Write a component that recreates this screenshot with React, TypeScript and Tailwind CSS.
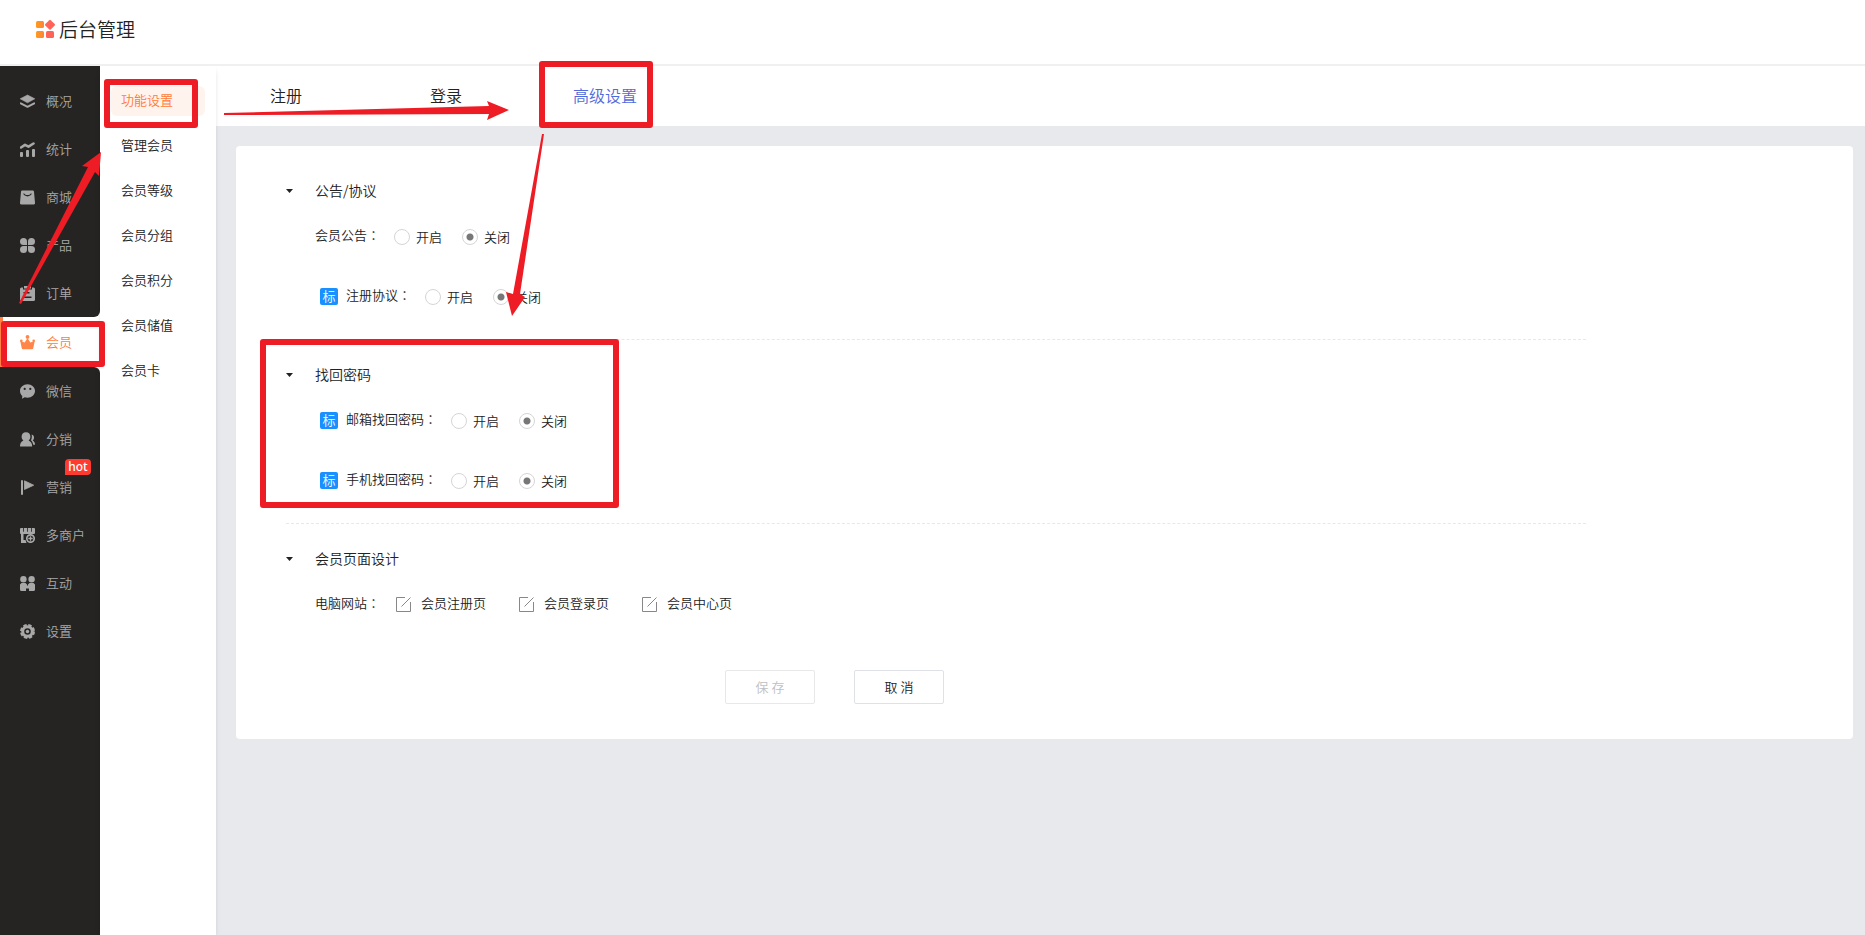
import React from "react";

type MenuItem = {
  label: string;
  icon: React.ReactNode;
  hot?: boolean;
};

const menuTop: MenuItem[] = [
  {
    label: "概况",
    icon: (
      <>
        <path d="M7.5 1 14.8 4.8 7.5 8.8 .2 4.8Z" stroke="currentColor" strokeLinejoin="round" strokeWidth=".6" />
        <path d="M.8 9.4 7.5 12.8 14.2 9.4" fill="none" stroke="currentColor" strokeWidth="2" strokeLinecap="round" strokeLinejoin="round" />
      </>
    ),
  },
  {
    label: "统计",
    icon: (
      <>
        <path d="M1 5.5 5 2.8 8.5 4.6 13.5 1.5" fill="none" stroke="currentColor" strokeWidth="2.6" strokeLinecap="round" strokeLinejoin="round" />
        <rect x="0" y="10" width="3" height="5" rx="1" />
        <rect x="6" y="8" width="3" height="7" rx="1" />
        <rect x="12" y="7" width="3" height="8" rx="1" />
      </>
    ),
  },
  {
    label: "商城",
    icon: (
      <path
        fillRule="evenodd"
        d="M2.3.5h10.4a1.3 1.3 0 0 1 1.3 1.2l1 11a1.6 1.6 0 0 1-1.6 1.8H1.6A1.6 1.6 0 0 1 0 12.7l1-11A1.3 1.3 0 0 1 2.3.5ZM3.2 3.6C4.2 7.3 10.8 7.3 11.8 3.6L10.8 3.6C9.5 5.6 5.5 5.6 4.2 3.6Z"
      />
    ),
  },
  {
    label: "产品",
    icon: (
      <>
        <path d="M3.5 0A3.5 3.5 0 0 1 7 3.5V7H3.5A3.5 3.5 0 0 1 3.5 0Z" />
        <path d="M11.5 0A3.5 3.5 0 0 1 11.5 7H8V3.5A3.5 3.5 0 0 1 11.5 0Z" />
        <path d="M3.5 8H7V11.5A3.5 3.5 0 1 1 3.5 8Z" />
        <path d="M8 8H11.5A3.5 3.5 0 1 1 8 11.5Z" />
      </>
    ),
  },
  {
    label: "订单",
    icon: (
      <path
        fillRule="evenodd"
        d="M1.5 1.5H3V3.5H12V1.5H13.5A1.5 1.5 0 0 1 15 3V13.5A1.5 1.5 0 0 1 13.5 15H1.5A1.5 1.5 0 0 1 0 13.5V3A1.5 1.5 0 0 1 1.5 1.5ZM4 0H11V2.500H4ZM3.5 6V7.5H9.5V6ZM3.5 10.5V12H11.5V10.5Z"
      />
    ),
  },
];

const menuBottom: MenuItem[] = [
  {
    label: "微信",
    icon: (
      <path
        fillRule="evenodd"
        d="M7.5.3C11.7.3 15 3.3 15 7S11.7 13.7 7.5 13.7C6.5 13.7 5.6 13.5 4.7 13.2L2 14.7 2.3 12C.9 10.8 0 9 0 7 0 3.3 3.3.3 7.5.3ZM4.7 3.8A1.1 1.1 0 1 0 4.7 6A1.1 1.1 0 1 0 4.7 3.8ZM10.3 3.8A1.1 1.1 0 1 0 10.3 6A1.1 1.1 0 1 0 10.3 3.8Z"
      />
    ),
  },
  {
    label: "分销",
    icon: (
      <>
        <path d="M6 .2C8.9.2 10.4 2.2 10.4 4.7 10.4 6.4 9.6 7.7 8.6 8.5 11 9.5 12.2 11.5 12.2 14.5H0C0 11.5 1 9.500 3.4 8.5 2.4 7.700 1.600 6.400 1.600 4.700 1.600 2.200 3.100.2 6 .2Z" />
        <path d="M11.600 2.500C13.400 2.800 14.200 4.200 14 6 13.900 7.200 13.300 8 12.700 8.600 14.200 9.500 15 11 15 12.700H13.200C12.800 10.800 12 9.300 10.900 8.300 11.900 6.500 12.100 4.500 11.600 2.500Z" />
      </>
    ),
  },
  {
    label: "营销",
    hot: true,
    icon: (
      <>
        <rect x="1" y="0" width="2" height="15" rx="1" />
        <path d="M4.500.8 13.700 5.200 4.500 9.500Z" stroke="currentColor" strokeWidth=".8" strokeLinejoin="round" />
      </>
    ),
  },
  {
    label: "多商户",
    icon: (
      <>
        <path d="M.5 0H3.200V4.500H0V1ZM4 0H7.200V4.500H4ZM8 0H11.200V4.500H8ZM12 0H14.500L15 1V4.500H12Z" />
        <path d="M0 3.800H15V5A1 1 0 0 1 14 6H1A1 1 0 0 1 0 5ZM1 5.500H3.500V12H5.500L6.500 15H1Z" />
        <circle cx="10.500" cy="10.500" r="3.700" fill="none" stroke="currentColor" strokeWidth="1.700" />
        <path d="M10.500 8.300V12.700M8.300 10.500H12.700" stroke="currentColor" strokeWidth="1.300" />
      </>
    ),
  },
  {
    label: "互动",
    icon: (
      <>
        <circle cx="3.400" cy="3.200" r="3.200" />
        <circle cx="11.600" cy="3.200" r="3.200" />
        <path d="M1.500 7H5.500L7 8.500V9.500H8V8.500L9.500 7H13.500L15 8.500V13.500A1.500 1.500 0 0 1 13.500 15H9V12.500H6V15H1.500A1.500 1.500 0 0 1 0 13.500V8.500Z" />
      </>
    ),
  },
  {
    label: "设置",
    icon: (
      <>
        <circle cx="7.500" cy="7.500" r="4.800" fill="none" stroke="currentColor" strokeWidth="3" />
        <circle cx="7.500" cy="7.500" r="6.400" fill="none" stroke="currentColor" strokeWidth="2.200" strokeDasharray="3.400 1.626" />
        <circle cx="7.500" cy="7.500" r="1.700" />
      </>
    ),
  },
];

const subMenu = ["功能设置", "管理会员", "会员等级", "会员分组", "会员积分", "会员储值", "会员卡"];

const tabs = ["注册", "登录", "高级设置"];

const pages = ["会员注册页", "会员登录页", "会员中心页"];

const Logo = () => (
  <svg viewBox="0 0 19 19" className="h-[19px] w-[19px] overflow-visible">
    <defs>
      <linearGradient id="logo" x1="0" x2="1">
        <stop offset="0" stopColor="#ff9a1f" />
        <stop offset="1" stopColor="#ff8336" />
      </linearGradient>
    </defs>
    <rect x="0" y="1" width="8" height="7" rx="1.500" fill="url(#logo)" />
    <rect x="0" y="11" width="8" height="7" rx="1.500" fill="url(#logo)" />
    <rect x="10" y="11" width="8" height="7" rx="1.500" fill="#ff6257" />
    <rect x="10.200" y="1" width="7.600" height="7.600" rx="1" fill="#ff6257" transform="rotate(45 14 4.800)" />
  </svg>
);

const MenuLink = ({ item }: { item: MenuItem }) => (
  <a href="#" className="relative flex h-12 items-center pl-5">
    <svg viewBox="0 0 15 15" className="mr-[11px] h-[15px] w-[15px]" fill="currentColor">
      {item.icon}
    </svg>
    {item.label}
    {item.hot && (
      <span className="absolute -top-1 left-[65px] flex h-4 w-[26px] items-center justify-center rounded-t-sm rounded-br-sm bg-[#ff3b30] font-['Noto_Sans',sans-serif] text-xs font-medium text-white">
        hot
      </span>
    )}
  </a>
);

const Section = ({ title, children }: { title: string; children: React.ReactNode }) => (
  <section>
    <h2 className="flex h-[30px] items-center text-sm">
      <svg viewBox="0 0 7 4" className="mr-[22px] h-1 w-[7px]">
        <path d="M0 0H7L3.500 4Z" fill="#222" />
      </svg>
      <span className="pb-0.5">{title}</span>
    </h2>
    <div className="pl-[29px]">{children}</div>
  </section>
);

const Divider = () => <hr className="mt-[13px] mb-5 max-w-[1300px] border-dashed border-[#e8e8e8]" />;

const FieldName = ({ children }: { children: string }) => (
  <span className="mr-[14px] pb-0.5">
    {children}
    <span className="font-['Noto_Sans_CJK_TC',sans-serif]" lang="zh-TW">
      ：
    </span>
  </span>
);

const RadioRow = ({ name, label, badge }: { name: string; label: string; badge?: boolean }) => (
  <fieldset className="flex h-[60px] items-center">
    {badge && (
      <span className="mr-2 ml-[5px] flex h-[17px] w-[18px] items-center justify-center rounded-xs bg-[#1890ff] pb-px text-[13px] text-white">
        标
      </span>
    )}
    <FieldName>{label}</FieldName>
    {["开启", "关闭"].map((option) => (
      <label key={option} className="mr-5 flex items-center gap-1.5 pt-0.5">
        <input
          type="radio"
          name={name}
          defaultChecked={option === "关闭"}
          className="h-4 w-4 appearance-none rounded-full border border-[#d5d5d5] bg-white checked:bg-[radial-gradient(circle,#777_3px,transparent_4px)]"
        />
        {option}
      </label>
    ))}
  </fieldset>
);

// Red pen marks laid over the page
const Marks = () => (
  <svg className="pointer-events-none absolute top-0 left-0 z-20 h-[520px] w-[700px]" viewBox="0 0 700 520">
    <g fill="none" stroke="#ee1c24" strokeWidth="6" strokeLinejoin="round">
      <rect x="107" y="82" width="88" height="43" />
      <rect x="4" y="324" width="98" height="40" />
      <rect x="542" y="64" width="108" height="61" />
      <rect x="263" y="342" width="353" height="163" />
    </g>
    <g fill="#ee1c24">
      <path d="M19 303 88 167 82 166 101 152 99 176 95 172 21 304Z" />
      <path d="M224 113 489 106 487 101 509 110 487 120 489 114 224 115Z" />
      <path d="M542 134 513 294 506 292 512 316 525 297 520 294 544 134Z" />
    </g>
  </svg>
);

export default function App() {
  return (
    <div className="relative flex min-h-screen flex-col bg-[#e8e9ed] font-['Noto_Sans_CJK_SC',sans-serif] text-[13px] font-[350] text-[#222]">
      <header className="flex h-[66px] items-center border-b-2 border-[#f0f0f0] bg-white pr-9 pb-1.5 pl-9">
        <Logo />
        <h1 className="ml-1 text-[19px]">后台管理</h1>
      </header>

      <div className="flex flex-1">
        <nav className="flex w-[100px] shrink-0 flex-col bg-white text-[#a8a8a8]">
          <div className="rounded-br-md bg-[#262422] pt-[11px]">
            {menuTop.map((item) => (
              <MenuLink key={item.label} item={item} />
            ))}
          </div>
          <a href="#" className="flex h-[50px] items-center border-l-[3px] border-[#ff7f47] pl-[17px] text-[#ff7a38]">
            <svg viewBox="0 0 15 15" className="mr-[11px] h-[15px] w-[15px]" fill="#ff8648">
              <circle cx="7.500" cy="1.900" r="1.900" />
              <circle cx="1.300" cy="5.700" r="1.300" />
              <circle cx="13.700" cy="5.700" r="1.300" />
              <path d="M.3 6 4.600 7.500 7.500 3.200 10.400 7.500 14.700 6 13.300 13A1.500 1.500 0 0 1 11.800 14.300H3.200A1.500 1.500 0 0 1 1.700 13Z" />
            </svg>
            会员
          </a>
          <div className="flex-1 rounded-tr-md bg-[#262422]">
            {menuBottom.map((item) => (
              <MenuLink key={item.label} item={item} />
            ))}
          </div>
        </nav>

        <nav className="z-10 flex w-[116px] shrink-0 flex-col gap-[15px] bg-white px-[11px] pt-5 shadow-md">
          {subMenu.map((label, i) => (
            <a
              key={label}
              href="#"
              className={
                i === 0
                  ? "flex h-[30px] items-center rounded-md bg-[#fff3ee] pb-0.5 pl-2.5 text-[#ff7a38]"
                  : "flex h-[30px] items-center pb-0.5 pl-2.5"
              }
            >
              {label}
            </a>
          ))}
        </nav>

        <main className="flex-1">
          <div className="flex h-[60px] gap-5 bg-white text-base">
            {tabs.map((tab) => (
              <button key={tab} className={tab === "高级设置" ? "w-[138px] pb-0.5 text-[#4f6bdb]" : "w-[140px] pb-0.5"}>
                {tab}
              </button>
            ))}
          </div>

          <form className="mt-5 mr-3 ml-5 rounded bg-white px-[50px] pt-[30px] pb-[35px]">
            <Section title="公告/协议">
              <RadioRow name="notice" label="会员公告" />
              <RadioRow name="agreement" label="注册协议" badge />
            </Section>
            <Divider />
            <Section title="找回密码">
              <RadioRow name="email" label="邮箱找回密码" badge />
              <RadioRow name="phone" label="手机找回密码" badge />
            </Section>
            <Divider />
            <Section title="会员页面设计">
              <div className="flex h-[60px] items-center">
                <FieldName>电脑网站</FieldName>
                {pages.map((page) => (
                  <a key={page} href="#" className="ml-0.5 mr-[31px] flex items-center gap-2.5">
                    <svg viewBox="0 0 15 15" className="h-[15px] w-[15px]" fill="none" stroke="#888">
                      <path d="M9 .5H.5V14.500H14.500V5M5.500 9.500 14.500.5" />
                    </svg>
                    <span className="pb-0.5">{page}</span>
                  </a>
                ))}
              </div>
            </Section>
            <div className="mt-9 flex max-w-[1300px] gap-[39px] pl-[439px]">
              <button type="button" disabled className="h-[34px] w-[90px] rounded-xs border border-[#e8e8e8] text-[#c0c0c0]">
                保 存
              </button>
              <button type="button" className="h-[34px] w-[90px] rounded-xs border border-[#e0e1e6]">
                取 消
              </button>
            </div>
          </form>
        </main>
      </div>

      <Marks />
    </div>
  );
}
